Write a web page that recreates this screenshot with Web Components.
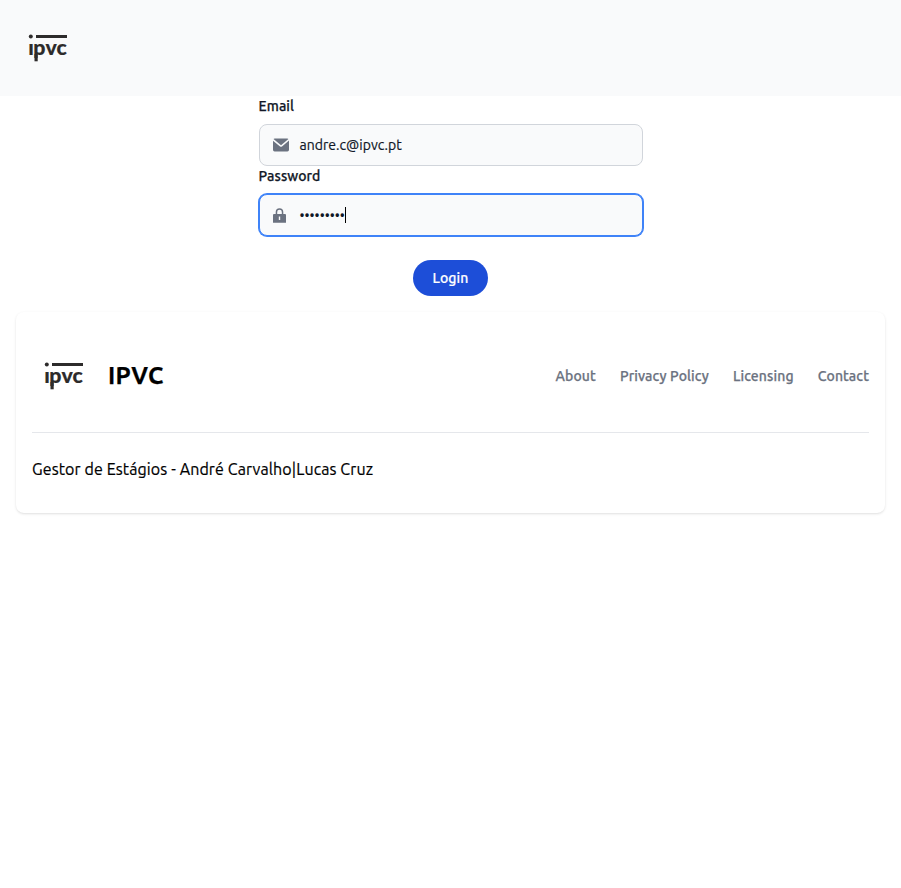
<!DOCTYPE html>
<html lang="pt">
<head>
<meta charset="utf-8">
<title>IPVC - Login</title>
<style>
body{margin:0;background:#fff;color:#000;font:400 16px/24px Ubuntu,"Noto Sans",sans-serif}
</style>
</head>
<body>
<login-page></login-page>
<script>
const define = (name, html) => customElements.define(name, class extends HTMLElement {
  constructor() {
    super();
    const t = document.createElement('template');
    t.innerHTML = html;
    this.attachShadow({mode: 'open'}).append(t.content.cloneNode(true));
  }
});

define('brand-logo', `
<style>:host{display:block;width:64px;height:64px;flex:none;letter-spacing:0;-webkit-text-stroke:0}svg{display:block}</style>
<svg width="64" height="64" viewBox="0 0 64 64" fill="#2d2b2b" role="img" aria-label="ipvc">
<clipPath id="low"><rect y="27.8" width="64" height="30"/></clipPath>
<circle cx="14.8" cy="20.6" r="2"/><path d="M20 19h31v3H20z"/>
<g clip-path="url(#low)"><text transform="scale(1.05 1)" x="11.7 16.4 28.2 38.6" y="39" font-family="Lato" font-weight="900" font-size="20.3" style="stroke:#2d2b2b;stroke-width:.15px">ipvc</text></g>
<path d="M18.5 38h3.2v7.3h-3.2z"/>
</svg>`);

define('site-header', `
<style>:host{display:flex;align-items:center;box-sizing:border-box;height:96px;padding:16px;background:#f9fafb}</style>
<brand-logo></brand-logo>`);

define('form-field', `
<style>
:host{display:block}
.label{display:block;margin-bottom:8px;font-size:14px;line-height:20px;font-weight:500;color:#111827;margin-left:-.4px;letter-spacing:.07px;-webkit-text-stroke:.25px}
.box{display:flex;align-items:center;box-sizing:border-box;height:42px;padding:0 13px;border:1px solid #d1d5db;border-radius:8px;background:#f9fafb;font-size:14px;line-height:20px;color:#111827;letter-spacing:.04px;-webkit-text-stroke:.2px}
:host([focused]) .box{border-color:#3f83f8;box-shadow:0 0 0 1px #3f83f8;letter-spacing:0;-webkit-text-stroke:0}
.icon{display:flex;width:26.5px;flex:none}
</style>
<span class="label"><slot name="label"></slot></span>
<div class="box"><span class="icon"><slot name="icon"></slot></span><slot></slot></div>`);

define('pill-button', `
<style>:host{display:block}
button{display:block;box-sizing:border-box;width:75px;height:36px;padding:0;border:0;border-radius:18px;background:#1d4ed8;color:#fff;font:500 14px/20px Ubuntu,"Noto Sans",sans-serif;letter-spacing:.08px;-webkit-text-stroke:.2px}</style>
<button type="button"><slot></slot></button>`);

define('site-footer', `
<style>
:host{display:block;margin:16px;padding:32px 16px;background:#fff;border-radius:8px;box-shadow:0 1px 3px rgba(0,0,0,.1),0 1px 2px -1px rgba(0,0,0,.1)}
.top{display:flex;align-items:center;justify-content:space-between;height:64px}
.brand{display:flex;align-items:center;gap:12px;font-size:24px;line-height:32px;font-weight:700;letter-spacing:.4px;-webkit-text-stroke:.25px}
nav{display:flex;gap:24px;font-size:14px;line-height:20px;font-weight:500;color:#6b7280;letter-spacing:.125px;-webkit-text-stroke:.25px}
hr{margin:24px 0;border:0;border-top:1px solid #e5e7eb}
.by{display:block;letter-spacing:.11px;-webkit-text-stroke:.2px}
</style>
<div class="top"><div class="brand"><brand-logo></brand-logo><span>IPVC</span></div>
<nav><span>About</span><span>Privacy Policy</span><span>Licensing</span><span>Contact</span></nav></div>
<hr><span class="by">Gestor de Estágios - André Carvalho|Lucas Cruz</span>`);

define('login-page', `
<style>
:host{display:block}
form{display:flex;flex-direction:column;width:384px;margin:0 auto;padding-left:1px;box-sizing:content-box}
pill-button{align-self:center;margin:24px 1px 0 0}
svg{display:block;fill:#6b7280}
.caret{width:1px;height:16px;background:#000}
</style>
<site-header></site-header>
<form>
<form-field><span slot="label">Email</span>
<svg slot="icon" width="16" height="16" viewBox="0 0 20 16"><path d="m10.036 8.278 9.258-7.79A1.979 1.979 0 0 0 18 0H2A1.987 1.987 0 0 0 .641.541l9.395 7.737Z"/><path d="M11.241 9.817c-.36.275-.801.425-1.255.427-.428 0-.845-.138-1.187-.395L0 2.6V14a2 2 0 0 0 2 2h16a2 2 0 0 0 2-2V2.5l-8.759 7.317Z"/></svg>
<span>andre.c@ipvc.pt</span></form-field>
<form-field focused><span slot="label">Password</span>
<svg slot="icon" width="13" height="16" viewBox="0 0 13 16"><path fill-rule="evenodd" d="M1 7h1.7V5a3.8 3.8 0 0 1 7.6 0v2H12a1 1 0 0 1 1 1v7.8H0V8a1 1 0 0 1 1-1Zm3.2 0h4.6V5a2.3 2.3 0 0 0-4.6 0v2Zm1.6 2.6v3.4h1.4v-3.4H5.8Z"/></svg>
<span>•••••••••</span><span class="caret"></span></form-field>
<pill-button>Login</pill-button>
</form>
<site-footer></site-footer>`);
</script>
</body>
</html>
